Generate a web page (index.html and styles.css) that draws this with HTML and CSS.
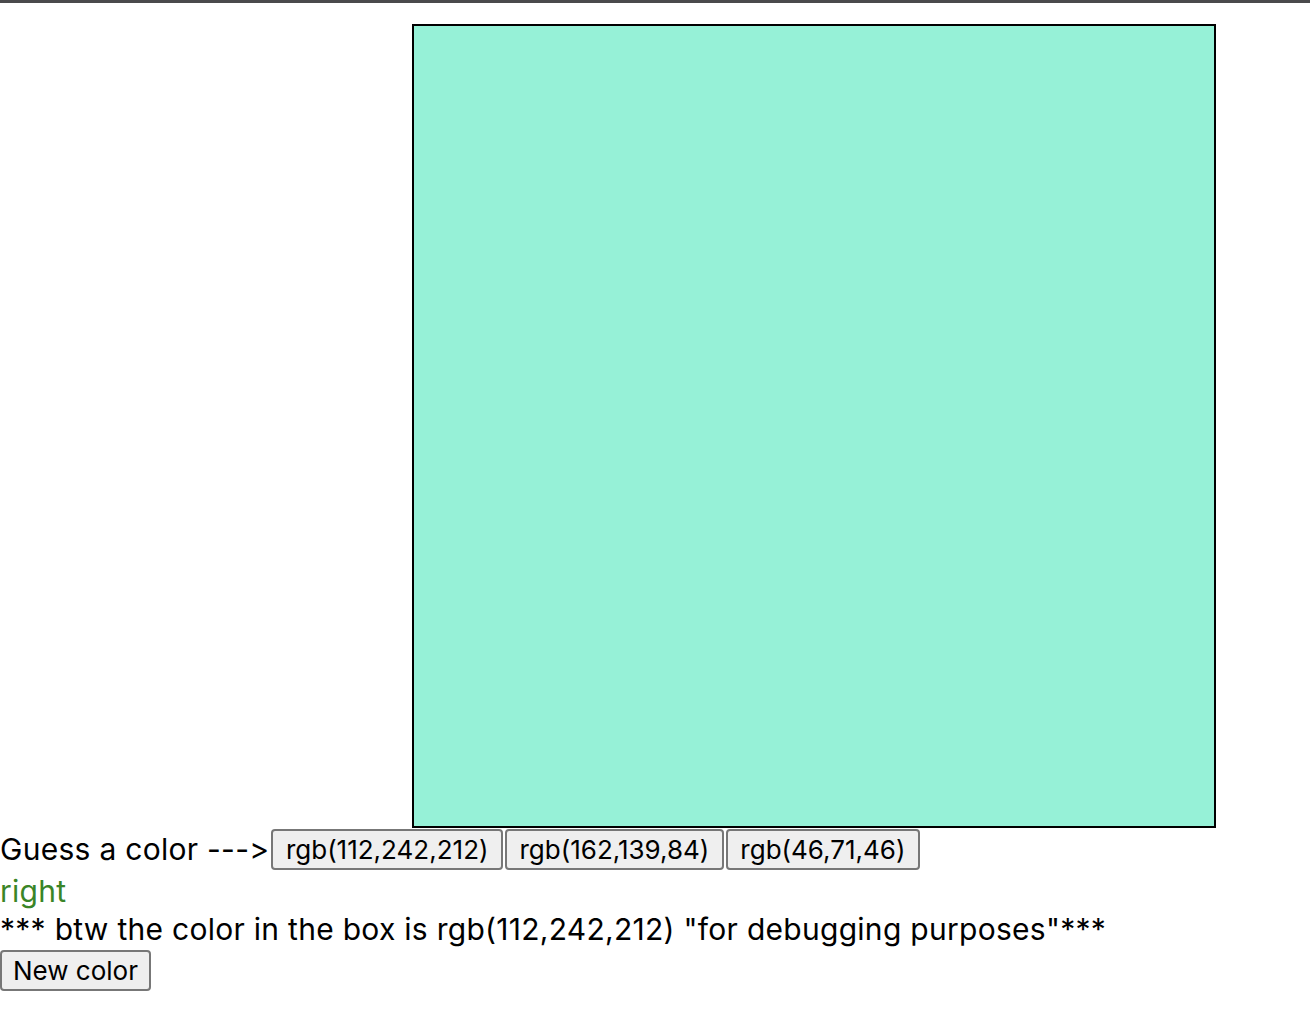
FILE: index.html
```html
<!DOCTYPE html>
<html>
<head>
<meta charset="utf-8">
<link rel="stylesheet" href="styles.css">
</head>
<body>
<div class="topbar"></div>
<div class="box"></div>
<div class="guess"><span class="label">Guess a color ---&gt;</span><button class="opt">rgb(112,242,212)</button><button class="opt">rgb(162,139,84)</button><button class="opt">rgb(46,71,46)</button></div>
<div class="result">right</div>
<div class="debug">*** btw the color in the box is rgb(112,242,212) "for debugging purposes"***</div>
<button class="newc">New color</button>
</body>
</html>
```
FILE: styles.css
```css
html, body { margin: 0; padding: 0; background: #fff; }
body { font-family: Inter, "Liberation Sans", Arial, sans-serif; font-size: 30px; color: #000; font-variant-ligatures: none; font-feature-settings: "calt" 0, "liga" 0; }
.topbar { height: 3px; background: #4a4a4c; }
.box { width: 800px; height: 800px; border: 2px solid #000; background: #96f1d7; margin: 21px 0 0 412px; }
.guess { display: flex; align-items: center; height: 44px; line-height: 44px; gap: 2px; margin-top: -1px; }
.label, .result, .debug { letter-spacing: 0.28px; }
.opt, .newc { font-family: Inter, "Liberation Sans", Arial, sans-serif; font-size: 26px; font-feature-settings: "calt" 0, "liga" 0; background: #efefef; border: 2px solid #777; border-radius: 4px; padding: 0 13px; height: 41px; color: #000; margin: 0; }
.opt { padding: 0 12.5px; }
.result { color: #3a8527; line-height: 38px; margin-top: 1px; }
.debug { line-height: 38px; }
.newc { margin: 2px 0 0 0; padding: 0 11px; }
```
